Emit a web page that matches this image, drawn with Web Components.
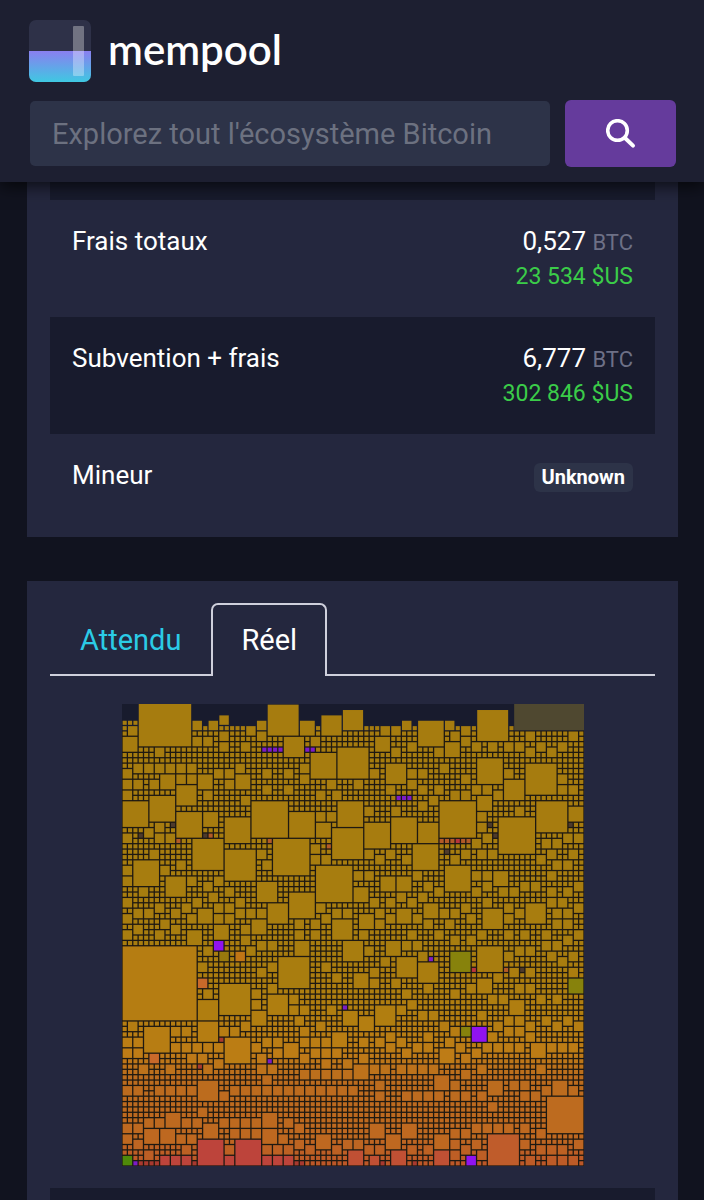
<!DOCTYPE html>
<html lang="fr">
<head>
<meta charset="utf-8">
<meta name="viewport" content="width=device-width, initial-scale=1">
<title>mempool</title>
<style>
  :root {
    --bg: #11131f;
    --header: #1d1f31;
    --card: #24273e;
    --row: #181b2d;
    --field: #2d3348;
    --purple: #653b9c;
    --cyan: #2bcbe6;
    --green: #3bcc49;
    --muted: #6d7086;
    --line: #cfd0dc;
  }
  body {
    margin: 0;
    background: var(--bg);
    color: #fff;
    font: 26px/36px Roboto, "Liberation Sans", sans-serif;
  }
  main {
    display: flex;
    flex-direction: column;
    gap: 44px;
    padding: 0 26px 0 27px;
  }
</style>
</head>
<body>

<app-header>
  <mempool-logo></mempool-logo>
  <search-bar></search-bar>
</app-header>

<main>
  <info-card>
    <detail-table></detail-table>
  </info-card>
  <info-card class="block">
    <block-tabs></block-tabs>
    <block-overview></block-overview>
    <row-strip></row-strip>
  </info-card>
</main>

<script>
function define(name, html, setup) {
  const template = document.createElement('template');
  template.innerHTML = html;

  customElements.define(name, class extends HTMLElement {
    constructor() {
      super();
      this.attachShadow({ mode: 'open' });
      this.shadowRoot.appendChild(template.content.cloneNode(true));
      if (setup) setup(this.shadowRoot);
    }
  });
}

define('app-header', /*html*/ `
  <style>
    :host {
      position: sticky;
      top: 0;
      z-index: 1;
      display: flex;
      flex-direction: column;
      gap: 18px;
      padding: 20px 28px 15px 29px;
      background: var(--header);
      box-shadow: 0 4px 16px rgba(0, 0, 0, 0.7);
    }
  </style>
  <slot></slot>
`);

define('mempool-logo', /*html*/ `
  <style>
    :host { display: block; }
    a {
      display: flex;
      align-items: center;
      gap: 17px;
      height: 62px;
      color: #fff;
      text-decoration: none;
      font: 600 42px/58px Lato, "Liberation Sans", sans-serif;
    }
    svg { width: 62px; height: 62px; }
    span { padding-bottom: 4px; }
  </style>
  <a href="#">
    <svg viewBox="0 0 62 62" aria-hidden="true">
      <defs>
        <linearGradient id="fill" x1="0" y1="0" x2="0" y2="1">
          <stop offset="0" stop-color="#8a7ff0"/>
          <stop offset="1" stop-color="#3fc8e2"/>
        </linearGradient>
        <clipPath id="box"><rect width="62" height="62" rx="7"/></clipPath>
      </defs>
      <g clip-path="url(#box)">
        <rect width="62" height="62" fill="#2e3148"/>
        <rect y="31" width="62" height="31" fill="url(#fill)"/>
      </g>
      <rect x="44" y="6" width="11" height="50" rx="1" fill="#fff" opacity="0.32"/>
    </svg>
    <span>mempool</span>
  </a>
`);

define('search-bar', /*html*/ `
  <style>
    :host { display: block; }
    form {
      display: flex;
      align-items: center;
      gap: 15px;
      padding-left: 1px;
    }
    input {
      flex: 1;
      min-width: 0;
      height: 65px;
      box-sizing: border-box;
      padding: 0 22px;
      border: 0;
      border-radius: 5px;
      background: var(--field);
      color: #fff;
      font: 29px/36px Roboto, "Liberation Sans", sans-serif;
    }
    input::placeholder { color: #6c7180; opacity: 1; }
    button {
      display: flex;
      align-items: center;
      justify-content: center;
      width: 111px;
      height: 67px;
      padding: 0;
      border: 0;
      border-radius: 6px;
      background: var(--purple);
    }
    svg { width: 30px; height: 30px; }
  </style>
  <form role="search">
    <input type="text" aria-label="Recherche" placeholder="Explorez tout l'écosystème Bitcoin">
    <button type="button" aria-label="Rechercher">
      <svg viewBox="0 0 30 30" fill="none" stroke="#fff" aria-hidden="true">
        <circle cx="11.500" cy="11.500" r="9.800" stroke-width="3.600"/>
        <path d="M19 19l8 7.600" stroke-width="4" stroke-linecap="round"/>
      </svg>
    </button>
  </form>
`);

define('info-card', /*html*/ `
  <style>
    :host {
      display: block;
      padding: 0 23px 22px;
      background: var(--card);
    }
    :host(.block) { padding: 22px 23px 0; }
  </style>
  <slot></slot>
`);

define('row-strip', /*html*/ `
  <style>
    :host { display: block; height: 12px; margin-top: 22px; background: var(--row); }
  </style>
`);

define('detail-table', /*html*/ `
  <style>
    :host { display: block; }
    table { width: 100%; border-collapse: collapse; }
    th, td { padding: 23px 22px 22px; vertical-align: top; }
    th { font-weight: 400; text-align: left; }
    td { text-align: right; }
    tr:nth-child(odd) { background: var(--row); }
    .scrolled td { height: 18px; padding: 0; }
    .unit { color: var(--muted); font-size: 22px; line-height: 24px; }
    .fiat { display: block; color: var(--green); font-size: 23px; }
    .badge {
      display: inline-block;
      padding: 0 8px;
      border-radius: 6px;
      background: var(--field);
      font-size: 20px;
      font-weight: 700;
      line-height: 29px;
    }
  </style>
  <table>
    <tbody>
      <tr class="scrolled"><td colspan="2"></td></tr>
      <tr>
        <th scope="row">Frais totaux</th>
        <td>0,527 <span class="unit">BTC</span><span class="fiat">23 534 $US</span></td>
      </tr>
      <tr>
        <th scope="row">Subvention + frais</th>
        <td>6,777 <span class="unit">BTC</span><span class="fiat">302 846 $US</span></td>
      </tr>
      <tr>
        <th scope="row">Mineur</th>
        <td><span class="badge">Unknown</span></td>
      </tr>
    </tbody>
  </table>
`);

define('block-tabs', /*html*/ `
  <style>
    :host { display: block; }
    nav { display: flex; border-bottom: 2px solid var(--line); }
    a {
      padding: 17px 28px 16px;
      border: 2px solid transparent;
      border-bottom: 0;
      border-radius: 7px 7px 0 0;
      color: var(--cyan);
      font-size: 29px;
      text-decoration: none;
    }
    .active {
      margin-bottom: -2px;
      border-color: var(--line);
      background: var(--card);
      color: #fff;
    }
  </style>
  <nav>
    <a href="#attendu">Attendu</a>
    <a href="#reel" class="active" aria-current="page">Réel</a>
  </nav>
`);

// Block layout on an 86 x 86 grid: square size -> "column,row" of each transaction
const GRID = 86;
const SQUARES = {
  14: '0,45',
  10: '3,-2',
  7: '24,18 59,18 70,21 28,25 36,30 79,73',
  6: '27,0 66,1 40,8 75,11 77,18 39,23 13,25 19,27 29,47 18,52 68,80',
  5: `55,3 35,9 66,10 5,17 0,18 40,18 10,20 31,20 19,21 50,21 45,22 54,26 2,29 60,30 31,35
      66,45 4,60 19,62 14,81 21,81`,
  4: `41,1 37,2 30,6 49,11 71,14 10,15 55,22 8,32 25,33 27,37 75,37 67,38 39,40 41,44 61,46
      51,47 55,48 27,54 14,55 47,56 14,59 14,70`,
  3: `33,3 0,6 47,6 60,7 7,13 14,13 21,13 66,17 83,19 15,20 36,22 69,31 48,32 51,32 43,34
      56,37 14,38 51,38 44,39 24,40 17,41 12,42 32,44 49,44 43,50 66,51 83,51 72,55 24,57
      41,57 44,58 65,60 39,61 30,63 76,63 59,64 43,67 58,69 68,70 80,70 8,76 26,76 15,78
      46,78 52,78 4,79 7,79 26,79 36,80 49,80 58,80 42,83 50,83 58,83`,
  2: `18,2 13,3 16,3 25,3 52,3 60,3 1,4 23,4 48,4 50,4 63,4 18,5 25,5 61,5 75,5 83,5
      13,6 15,6 35,6 63,6 18,7 22,7 53,7 65,7 68,7 71,7 73,7 77,7 81,7 6,8 50,8 58,8 75,8 79,8
      2,11 4,11 6,11 8,11 10,11 12,11 21,11 33,11 59,11 0,12 17,12 19,12 26,12 30,12 46,12
      53,12 55,12 71,12 10,13 12,13 33,13 63,13 81,13 0,14 2,14 5,14 19,14 38,14 43,14 53,14
      26,15 30,15 49,15 55,15 58,15 65,15 67,15 81,15 83,15 0,16 15,16 36,16 39,16 61,16 63,16
      69,16 22,17 57,17 55,18 45,19 50,19 73,19 36,20 38,20 66,20 6,22 66,22 4,23 0,24 6,24
      8,24 67,24 82,24 84,24 65,25 78,25 80,25 35,26 5,27 25,27 45,27 49,27 63,27 66,27 68,27
      79,27 83,27 35,28 37,28 47,28 52,28 61,28 77,28 10,29 26,29 80,29 82,29 0,30 7,30
      43,31 45,31 54,31 65,31 67,31 79,31 0,32 12,32 17,32 15,33 56,33 67,33 74,33 76,33 84,33
      3,34 19,34 58,34 65,34 70,34 72,34 79,34 82,34 16,35 51,35 55,35 0,36 13,36 21,36 46,36
      49,36 53,36 67,36 79,36 81,36 6,37 11,37 17,37 19,37 36,37 63,37 71,37 84,37 2,38 4,38
      9,38 21,38 23,38 25,38 39,38 41,38 47,38 59,38 61,38 73,38 80,38 82,38 0,39 12,39 17,39
      19,39 37,39 49,39 54,39 64,39 71,39 7,40 32,40 35,40 47,40 56,40 60,40 80,40 82,40 2,41
      9,41 22,41 0,42 6,42 32,42 35,42 44,42 53,42 58,42 66,42 71,42 74,42 78,42 84,42 22,43
      61,43 64,43 82,43 17,44 25,44 27,44 52,44 54,44 78,44 80,44 15,45 23,45 45,45 73,45 75,45
      18,46 21,46 55,46 71,46 79,46 83,46 48,47 81,47 14,48 27,48 37,48 25,49 46,49 72,49 75,49
      83,49 39,50 69,50 14,51 46,51 50,51 27,52 56,52 64,52 73,52 75,52 15,53 24,53 52,53 61,53
      31,54 68,54 70,54 77,54 80,54 24,55 53,55 31,56 33,56 38,56 51,56 55,57 57,57 66,57
      32,58 71,58 73,58 78,58 82,58 1,59 22,59 36,59 59,59 69,59 75,59 80,59 84,59 9,60 11,60
      18,60 20,60 33,60 61,60 63,60 71,60 73,60 49,61 56,61 68,61 75,61 0,62 2,62 26,62 28,62
      33,62 35,62 37,62 44,62 47,62 51,62 60,62 9,63 11,63 13,63 15,63 17,63 24,63 49,63 54,63
      56,63 62,63 67,63 69,63 71,63 73,63 79,63 81,63 83,63 0,64 2,64 28,64 35,64 37,64 39,64
      52,64 65,64 5,65 12,65 14,65 25,65 33,65 44,65 63,65 17,66 37,66 41,66 3,67 8,67 15,67
      25,67 27,67 46,67 48,67 51,67 53,67 55,67 57,67 66,67 77,67 33,68 35,68 37,68 39,68 41,68
      63,68 26,69 47,70 61,70 72,70 74,70 0,71 2,71 6,71 8,71 10,71 12,71 20,71 22,71 24,71
      26,71 28,71 30,71 32,71 34,71 36,71 38,71 40,71 42,71 78,71 83,71 18,72 47,72 52,72 54,72
      56,72 58,72 61,72 63,72 66,72 74,72 76,72 68,74 14,75 4,77 6,77 11,77 13,77 18,77 20,77
      22,77 24,77 28,77 30,77 0,78 2,78 32,78 65,78 67,78 69,78 71,78 74,78 20,79 22,79 24,79
      61,79 63,79 77,79 0,80 10,80 12,80 29,80 2,81 32,81 41,81 43,81 61,81 65,81 74,81 84,81
      11,82 19,82 26,82 28,82 30,82 34,82 39,82 45,82 47,82 53,82 56,82 63,82 77,82 79,82 81,82
      4,83 61,83 66,83 0,84 7,84 9,84 11,84 19,84 26,84 28,84 30,84 46,84 64,84 75,84 79,84
      81,84 83,84`
};

// Transactions whose colour is not that of their row
const TINTS = {
  '#9013f0': '17,44 65,60 64,84',
  '#7d1cc8': '26,8 27,8 28,8 29,8 34,8 35,8 51,17 52,17 53,17 57,47 41,56 27,66 2,85',
  '#87820c': '61,46 83,51 63,60',
  '#98790d': '18,46',
  '#4f8a0a': '0,84',
  '#c07515': '21,46',
  '#c9692a': '14,51 5,65',
  '#bd443b': '14,81 21,81 7,84 9,84 11,84 19,84 26,84 28,84 30,84',
  '#c05034': '42,83 50,83 58,83 46,84',
  '#bf5c2b': '68,80',
  '#a8392f': '3,85 4,85 5,85 6,85 13,85 4,84 32,85 33,85 48,85 52,85 54,85 18,62 14,67',
  '#b25a28': '10,25 27,25 38,26 16,24 59,25 60,25 61,25 63,25 64,25 71,49',
  '#b8343c': '62,25 65,49',
  '#4d3a2c': '9,22 3,24 15,24 68,22 69,24 83,22 60,27 74,49'
};

// Fee colour by row, from the cheapest at the top to the dearest at the bottom
const RAMP = [
  [0, 166, 124, 15], [46, 168, 125, 15], [57, 178, 126, 16],
  [64, 190, 124, 22], [69, 188, 108, 30], [80, 190, 104, 32], [86, 188, 84, 42]
];

function rowColor(row) {
  const y = Math.max(row, 0);
  const i = Math.max(1, RAMP.findIndex(stop => stop[0] > y));
  const a = RAMP[i - 1];
  const b = RAMP[i];
  const t = (y - a[0]) / (b[0] - a[0]);
  const rgb = [1, 2, 3].map(n => Math.round(a[n] + (b[n] - a[n]) * t));
  return `rgb(${rgb})`;
}

function drawBlock() {
  const tints = {};
  for (const [color, list] of Object.entries(TINTS)) {
    list.split(/\s+/).forEach(key => { tints[key] = color; });
  }

  const used = new Set();
  let rects = '';
  const add = (x, y, size) => {
    for (let r = y; r < y + size; r++) {
      for (let c = x; c < x + size; c++) {
        if (used.has(c + ',' + r)) return;
      }
    }
    for (let r = y; r < y + size; r++) {
      for (let c = x; c < x + size; c++) used.add(c + ',' + r);
    }
    const color = tints[x + ',' + y] || rowColor(size > 9 ? y + size : y);
    rects += `<rect x="${x + 0.12}" y="${y + 0.12}" width="${size - 0.24}" height="${size - 0.24}" fill="${color}"/>`;
  };

  Object.keys(SQUARES).sort((a, b) => b - a).forEach(size => {
    SQUARES[size].trim().split(/\s+/).forEach(key => {
      const [x, y] = key.split(',').map(Number);
      add(x, y, Number(size));
    });
  });

  for (let y = 3; y < GRID; y++) {
    for (let x = 0; x < GRID; x++) {
      const top = x < 3 ? 3 : x > 72 ? 5 : 4;
      if (y >= top) add(x, y, 1);
    }
  }
  return rects;
}

define('block-overview', /*html*/ `
  <style>
    :host { display: block; width: 462px; max-width: 100%; margin: 28px auto 0; }
    svg { display: block; width: 100%; }
  </style>
  <svg viewBox="0 0 86 86" role="img" aria-label="Transactions du bloc"></svg>
`, root => {
  root.querySelector('svg').innerHTML =
    '<rect width="86" height="86" fill="#181b2d"/>' +
    '<rect y="5" width="86" height="81" fill="#1e1912"/>' +
    '<rect x="73" width="13" height="4.9" fill="#4f4830"/>' +
    drawBlock();
});
</script>
</body>
</html>
